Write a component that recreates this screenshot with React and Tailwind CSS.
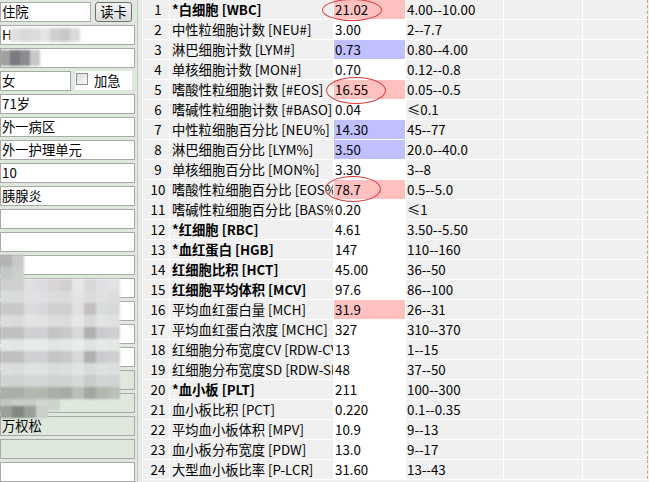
import React from 'react';

const rows = [
  [1, '*白细胞 [WBC]', '21.02', '4.00--10.00', 'p', true],
  [2, '中性粒细胞计数 [NEU#]', '3.00', '2--7.7', '', false],
  [3, '淋巴细胞计数 [LYM#]', '0.73', '0.80--4.00', 'b', false],
  [4, '单核细胞计数 [MON#]', '0.70', '0.12--0.8', '', false],
  [5, '嗜酸性粒细胞计数 [#EOS]', '16.55', '0.05--0.5', 'p', false],
  [6, '嗜碱性粒细胞计数 [#BASO]', '0.04', '≤0.1', '', false],
  [7, '中性粒细胞百分比 [NEU%]', '14.30', '45--77', 'b', false],
  [8, '淋巴细胞百分比 [LYM%]', '3.50', '20.0--40.0', 'b', false],
  [9, '单核细胞百分比 [MON%]', '3.30', '3--8', '', false],
  [10, '嗜酸性粒细胞百分比 [EOS%]', '78.7', '0.5--5.0', 'p', false],
  [11, '嗜碱性粒细胞百分比 [BAS%]', '0.20', '≤1', '', false],
  [12, '*红细胞 [RBC]', '4.61', '3.50--5.50', '', true],
  [13, '*血红蛋白 [HGB]', '147', '110--160', '', true],
  [14, '红细胞比积 [HCT]', '45.00', '36--50', '', true],
  [15, '红细胞平均体积 [MCV]', '97.6', '86--100', '', true],
  [16, '平均血红蛋白量 [MCH]', '31.9', '26--31', 'p', false],
  [17, '平均血红蛋白浓度 [MCHC]', '327', '310--370', '', false],
  [18, '红细胞分布宽度CV [RDW-CV]', '13', '1--15', '', false],
  [19, '红细胞分布宽度SD [RDW-SD]', '48', '37--50', '', false],
  [20, '*血小板 [PLT]', '211', '100--300', '', true],
  [21, '血小板比积 [PCT]', '0.220', '0.1--0.35', '', false],
  [22, '平均血小板体积 [MPV]', '10.9', '9--13', '', false],
  [23, '血小板分布宽度 [PDW]', '13.0', '9--17', '', false],
  [24, '大型血小板比率 [P-LCR]', '31.60', '13--43', '', false],
];

const mosaic = [
  [255, ['#b4b4b4', '#c8c8cc']],
  [267, ['#c4c8c4', '#ccd0cc']],
  [279, ['#d0d0d0', '#d0d0d0', '#e0e0e0', '#dcdce0', '#d8d4d4', '#d0d0d0', '#e6e6e6', '#d8d8d8', '#e0e0e4', '#e0e4e0']],
  [291, ['#d8dcdc', '#d8dcd8', '#e0e0e0', '#e0e0e4', '#dcdcdc', '#dcdcdc', '#e4e4e4', '#dcdcdc', '#e0e0e0', '#dcdcdc']],
  [303, ['#c8c8c8', '#c8c8c8', '#dcdcdc', '#d8d8dc', '#d0d0d0', '#d0d0d0', '#e0e0e0', '#c4c0c0', '#d8dcdc', '#d8d8d8']],
  [315, ['#dcdedc', '#dadcda', '#e2e4e2', '#e0e2e4', '#dcdcdc', '#dcdedc', '#e6e8e6', '#d8dad8', '#e2e4e4', '#e0e2e0']],
  [327, ['#c0c0c0', '#c0c0c0', '#d0d0d0', '#d0d0d4', '#c4c4c4', '#c8c8c8', '#d8d8d8', '#b0b0b0', '#ccccd0', '#d0d0d0']],
  [339, ['#e4e8e4', '#e2e6e2', '#e8ece8', '#e6eaea', '#e2e6e2', '#e4e8e4', '#eaeeea', '#e0e4e0', '#e6eaea', '#e4e8e4']],
  [351, ['#c0c0c0', '#c0c0c0', '#d0d0d0', '#d0d0d4', '#c4c4c4', '#c8c8c8', '#d8d8d8', '#b0b0b0', '#ccccd0', '#d0d0d0']],
  [363, ['#dce0dc', '#dadeda', '#e0e4e0', '#dee2e2', '#dadeda', '#dce0dc', '#e2e6e2', '#d8dcd8', '#dee2e2', '#dce0dc']],
  [375, ['#d0d4d0', '#cfd3cf', '#d4d8d4', '#d2d6d6', '#cfd3cf', '#d0d4d0', '#d6dad6', '#cacecA', '#d2d6d6', '#d0d4d0']],
  [387, ['#a8b0a8', '#a8b0a8', '#b0b8b0', '#b0b8b0', '#a8b0a8', '#a4aca4', '#b8c0b8', '#a0a8a0', '#b0b8b0', '#b8c0b8']],
  [399, ['#c0c8c0', '#c8d0c8', '#c4ccc4', '#d0d8d0', '#ccd4cc']],
  [406, ['#98a098', '#808880', '#98a098', '#c8d0c8']],
];

function Input({ children, className = '', green = false }) {
  return (
    <div
      className={`h-[20px] border border-[#a9a9a9] leading-[18px] pl-[1px] overflow-hidden whitespace-nowrap ${
        green ? 'bg-[#dfe8dd]' : 'bg-white'
      } ${className}`}
    >
      {children}
    </div>
  );
}

export default function App() {
  return (
    <div className="relative flex w-[649px] h-[482px] overflow-hidden bg-[#f0f0f0] text-black text-[13.3px] font-['Microsoft_YaHei','Noto_Sans_CJK_SC',sans-serif]">
      {/* Left panel */}
      <div className="w-[137px] shrink-0 bg-[#dfe8dd] flex flex-col gap-[3px] pt-[2px]">
        <div className="flex items-start">
          <Input className="w-[91px]">住院</Input>
          <div className="ml-[4px] w-[37px] h-[20px] border border-[#707070] rounded-[3px] bg-gradient-to-b from-[#f4f4f4] to-[#dcdcdc] text-center leading-[18px]">
            读卡
          </div>
        </div>
        <Input className="w-[135px]">H</Input>
        <Input className="w-[135px]"> </Input>
        <div className="flex items-start">
          <Input className="w-[71px]">女</Input>
          <div className="ml-[4px] w-[57px] h-[19px] bg-white flex items-center">
            <div className="ml-[1px] w-[12px] h-[12px] border border-[#8e8f8f] bg-gradient-to-br from-[#dcdcdc] to-[#fafafa] mb-[3px]" />
            <span className="ml-[6px] leading-[18px]">加急</span>
          </div>
        </div>
        <Input className="w-[135px]">71岁</Input>
        <Input className="w-[135px]">外一病区</Input>
        <Input className="w-[135px]">外一护理单元</Input>
        <Input className="w-[135px]">10</Input>
        <Input className="w-[135px]">胰腺炎</Input>
        <Input className="w-[135px]" />
        <Input className="w-[135px]" />
        <Input className="w-[135px]" />
        <Input className="w-[135px]" />
        <Input className="w-[135px]" />
        <Input className="w-[135px]" />
        <Input className="w-[135px]" />
        <Input className="w-[135px]" green />
        <Input className="w-[135px]" green />
        <Input className="w-[135px]" green>万权松</Input>
        <Input className="w-[135px]" green />
        <Input className="w-[135px]" />
      </div>
      <div className="w-[1px] shrink-0 bg-[#c4ccc4]" />
      <div className="w-[4px] shrink-0 bg-[#e6ece6]" />
      <div className="w-[1px] shrink-0 bg-white" />

      {/* Table */}
      <div className="flex-1 flex flex-col">
        {rows.map(([n, name, val, range, hl, bold]) => (
          <div key={n} className="flex h-[20px] shrink-0 border-b border-white leading-[19px]">
            <div className="w-[27px] shrink-0 border-r border-white text-center pl-[4px]">{n}</div>
            <div
              className={`w-[164px] shrink-0 border-r border-white pl-[2px] overflow-hidden whitespace-nowrap ${
                bold ? 'font-bold' : ''
              }`}
            >
              {name}
            </div>
            <div
              className={`w-[72px] shrink-0 border-r border-white pl-[1px] overflow-hidden whitespace-nowrap ${
                hl === 'p' ? 'bg-[#ffc0c0]' : hl === 'b' ? 'bg-[#c0c0ff]' : 'bg-white'
              }`}
            >
              {val}
            </div>
            <div className="w-[98px] shrink-0 border-r border-white pl-[1px] whitespace-nowrap">{range}</div>
            <div className="w-[79px] shrink-0 border-r border-white" />
            <div className="w-[65px] shrink-0 border-r border-dashed border-r-[#e0a040]" />
          </div>
        ))}
      </div>

      {/* Red ellipses */}
      <div className="absolute left-[322px] top-[-1px] w-[60px] h-[22px] border border-[#e03a3a] rounded-[50%]" />
      <div className="absolute left-[326px] top-[77px] w-[60px] h-[27px] border border-[#e03a3a] rounded-[50%]" />
      <div className="absolute left-[325px] top-[176px] w-[56px] h-[26px] border border-[#e03a3a] rounded-[50%]" />

      {/* Mosaic redactions */}
      <div className="absolute left-[10px] top-[28px] flex blur-[1.5px]">
        {['#e0e0e0', '#d8d8d8', '#dcdcdc', '#e4e4e4', '#cfcfcf', '#c8c8c8', '#dadada'].map((c, i) => (
          <div key={i} className="w-[10px] h-[14px]" style={{ background: c }} />
        ))}
      </div>
      <div className="absolute left-[0px] top-[50px] flex blur-[1px]">
        {['#a0a0a0', '#787c80', '#8c8c90', '#c8c8c8'].map((c, i) => (
          <div key={i} className="w-[10px] h-[16px]" style={{ background: c }} />
        ))}
      </div>
      <div className="absolute left-0 top-0 blur-[1.2px]">
        {mosaic.map(([y, cols]) => (
          <div key={y} className="absolute left-0 flex" style={{ top: y }}>
            {cols.map((c, i) => (
              <div key={i} className="w-[12px] h-[12px]" style={{ background: c }} />
            ))}
          </div>
        ))}
      </div>
    </div>
  );
}
